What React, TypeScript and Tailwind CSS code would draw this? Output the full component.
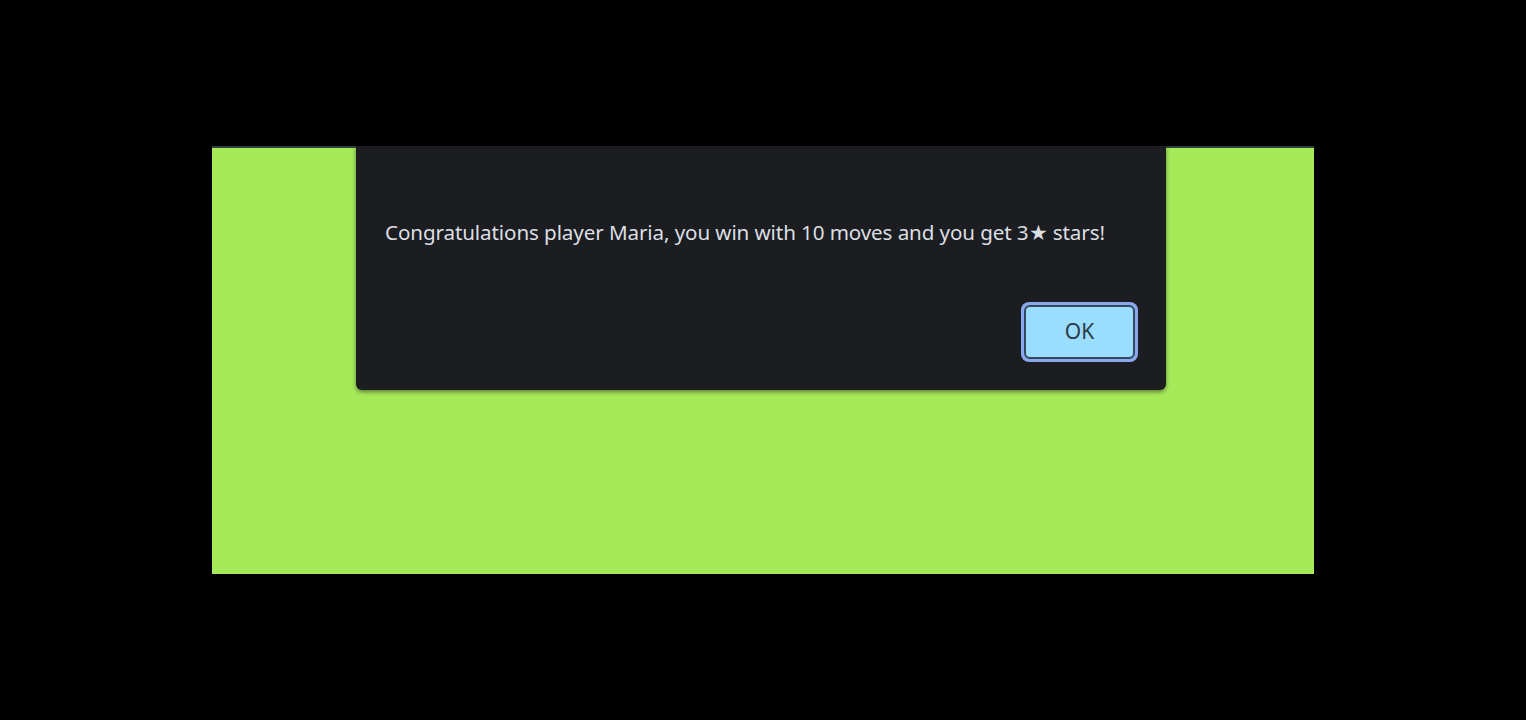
import React from 'react';

export default function App() {
  return (
    <div className="w-[1526px] h-[720px] bg-black pt-[146px] pl-[212px]">
      {/* game area */}
      <div className="relative w-[1102px] h-[428px] bg-[#a6ea5a] border-t-2 border-[#34403c]">
        {/* alert dialog */}
        <div className="absolute left-[144px] top-[-2px] w-[810px] h-[244px] bg-[#1b1d21] rounded-b-[6px] shadow-[0_2px_4px_rgba(0,0,0,0.45)] pl-[29px] pr-[28px] pt-[72px] font-['Noto_Sans',sans-serif]">
          <p className="text-[20.6px] leading-[28px] text-[#dcdfe3] tracking-[-0.1px] whitespace-nowrap">
            Congratulations player Maria, you win with 10 moves and you get 3★ stars!
          </p>
          <div className="flex justify-end mt-[56px]">
            <button className="w-[117px] h-[60px] rounded-[8px] bg-[#8aa8f0] p-[3px]">
              <span className="flex w-full h-full items-center justify-center rounded-[6px] border-2 border-[#34485c] bg-[#99ddff] text-[21px] text-[#2b3a48]">
                OK
              </span>
            </button>
          </div>
        </div>
      </div>
    </div>
  );
}
